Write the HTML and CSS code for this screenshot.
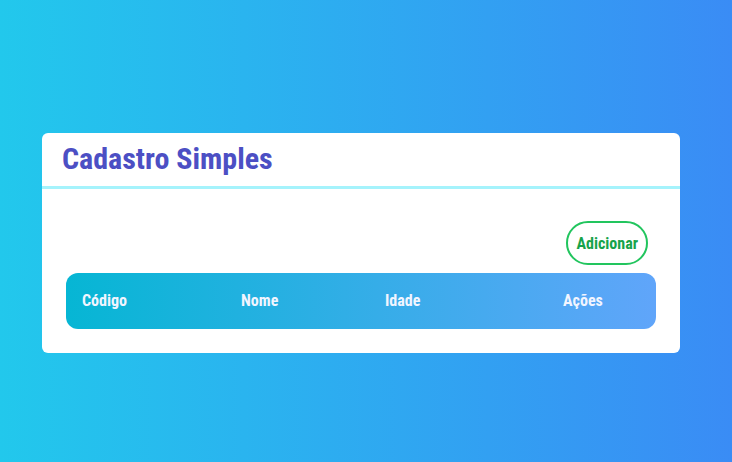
FILE: index.html
```html
<!DOCTYPE html>
<html lang="pt-BR">
<head>
<meta charset="utf-8">
<title>Cadastro Simples</title>
<link rel="stylesheet" href="styles.css">
</head>
<body>
<main class="page">
  <section class="card">
    <header class="card-header">
      <h1 class="title">Cadastro Simples</h1>
    </header>
    <div class="card-body">
      <div class="toolbar">
        <button class="btn-add" type="button">Adicionar</button>
      </div>
      <div class="table-head">
        <span class="th">Código</span>
        <span class="th">Nome</span>
        <span class="th">Idade</span>
        <span class="th">Ações</span>
      </div>
    </div>
  </section>
</main>
</body>
</html>
```
FILE: styles.css
```css
* { box-sizing: border-box; }
html, body { margin: 0; height: 100%; }
body {
  font-family: "Roboto", "Liberation Sans", sans-serif;
  font-stretch: condensed;
  background: linear-gradient(to right, #22c8ec, #3a8cf5);
}
.page {
  height: 462px;
  padding: 133px 52px 0 42px;
}
.card {
  background: #fff;
  border-radius: 6px;
  width: 638px;
  height: 220px;
}
.card-header {
  height: 56px;
  border-bottom: 3px solid #a5f3fc;
  padding: 8px 20px 0;
}
.title {
  margin: 0;
  font-size: 30px;
  font-weight: 700;
  color: #4c4fc4;
  line-height: 36px;
}
.card-body {
  padding: 32px 24px 0;
}
.toolbar {
  display: flex;
  justify-content: flex-end;
  padding-right: 8px;
}
.btn-add {
  font-family: inherit;
  font-stretch: condensed;
  height: 44px;
  padding: 0 8px;
  border: 2px solid #22c55e;
  border-radius: 22px;
  background: #fff;
  color: #16a34a;
  font-size: 16px;
  font-weight: 700;
}
.table-head {
  margin-top: 8px;
  height: 56px;
  border-radius: 12px;
  background: linear-gradient(to right, #06b6d4, #60a5fa);
  display: grid;
  grid-template-columns: 159px 144px 178px 1fr;
  align-items: center;
  padding: 0 16px 1px;
}
.th {
  color: #f1f5ff;
  font-size: 16px;
  font-weight: 700;
}
```
